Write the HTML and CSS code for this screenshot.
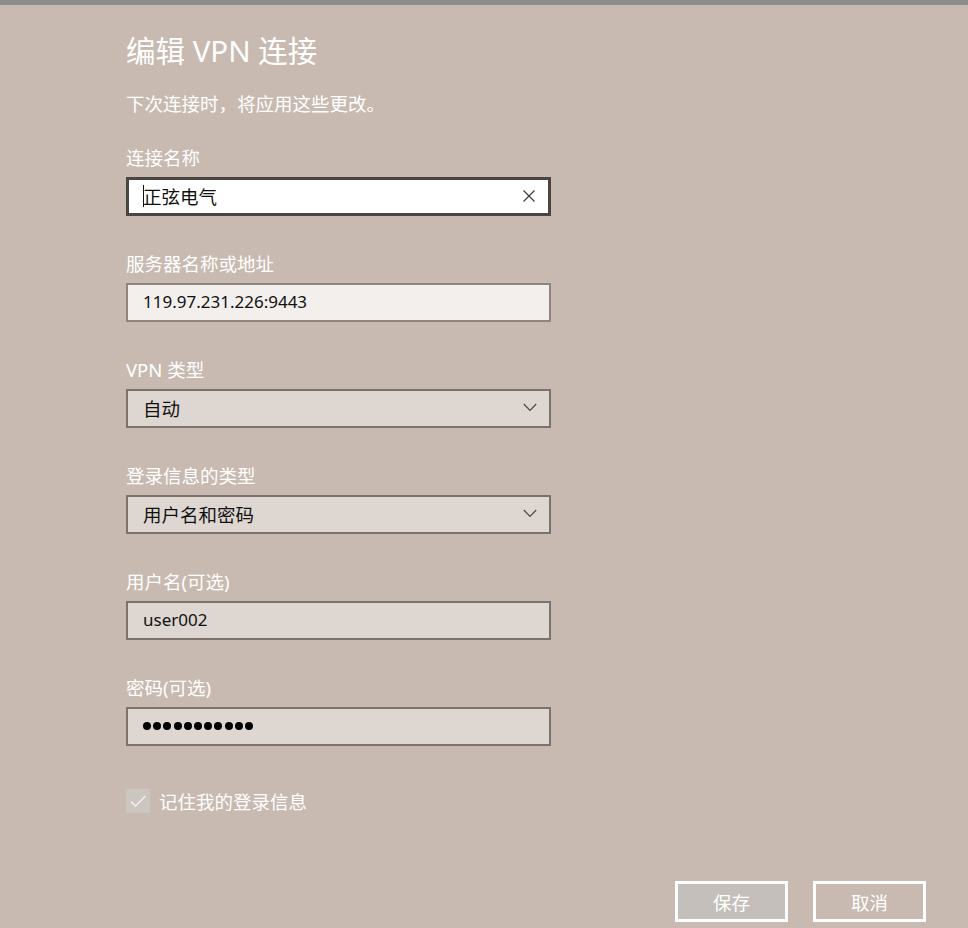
FILE: index.html
```html
<!DOCTYPE html>
<html lang="zh-CN">

<head>
  <meta charset="UTF-8" />
  <title>编辑 VPN 连接</title>
  <link rel="stylesheet" href="styles.css">
</head>

<body>

  <div class="topbar"></div>

  <div class="panel">
    <h1>编辑 VPN 连接</h1>
    <p class="hint">下次连接时，将应用这些更改。</p>

    <div class="field">
      <label>连接名称</label>
      <div class="box box-focus">
        <span class="value"><span class="caret"></span>正弦电气</span>
        <svg class="icon" width="14" height="14" viewBox="0 0 14 14">
          <path d="M1.5 1.5 L12.5 12.5 M12.5 1.5 L1.5 12.5" stroke="#3a3633" stroke-width="1.1" fill="none" />
        </svg>
      </div>
    </div>

    <div class="field">
      <label>服务器名称或地址</label>
      <div class="box box-light">
        <span class="value latin">119.97.231.226:9443</span>
      </div>
    </div>

    <div class="field">
      <label>VPN 类型</label>
      <div class="box box-select">
        <span class="value">自动</span>
        <svg class="icon" width="14" height="9" viewBox="0 0 14 9">
          <path d="M0.8 1 L7 7.5 L13.2 1" stroke="#4a4440" stroke-width="1.1" fill="none" />
        </svg>
      </div>
    </div>

    <div class="field">
      <label>登录信息的类型</label>
      <div class="box box-select">
        <span class="value">用户名和密码</span>
        <svg class="icon" width="14" height="9" viewBox="0 0 14 9">
          <path d="M0.8 1 L7 7.5 L13.2 1" stroke="#4a4440" stroke-width="1.1" fill="none" />
        </svg>
      </div>
    </div>

    <div class="field">
      <label>用户名(可选)</label>
      <div class="box box-select">
        <span class="value latin">user002</span>
      </div>
    </div>

    <div class="field">
      <label>密码(可选)</label>
      <div class="box box-select">
        <span class="dots">
          <i></i><i></i><i></i><i></i><i></i><i></i><i></i><i></i><i></i><i></i><i></i>
        </span>
      </div>
    </div>

    <div class="remember">
      <span class="check">
        <svg width="24" height="24" viewBox="0 0 24 24">
          <path d="M5 12.5 L9.5 17 L19.5 7" stroke="#f4f1ee" stroke-width="1.4" fill="none" />
        </svg>
      </span>
      <span>记住我的登录信息</span>
    </div>
  </div>

  <div class="actions">
    <button class="btn btn-save">保存</button>
    <button class="btn">取消</button>
  </div>

</body>
</html>
```

FILE: styles.css
```css
body {
  margin: 0;
  background: #c8bab0;
  font-family: 'Noto Sans', 'Noto Sans CJK SC', sans-serif;
  color: #ffffff;
  height: 928px;
  overflow: hidden;
}

.topbar {
  height: 5px;
  background: #8c8c8c;
}

.panel {
  padding-left: 126px;
  width: 425px;
}

h1 {
  font-size: 29.5px;
  font-weight: 400;
  line-height: 36px;
  margin: 28px 0 0 0;
}

.hint {
  font-size: 18.5px;
  line-height: 24px;
  margin: 23px 0 0 0;
}

.field {
  margin-top: 30px;
}

.field + .field {
  margin-top: 36px;
}

.field label {
  display: block;
  font-size: 18.5px;
  line-height: 24px;
  margin-bottom: 7px;
}

.box {
  box-sizing: border-box;
  height: 39px;
  display: flex;
  align-items: center;
  justify-content: space-between;
  padding: 0 12px 2px 15px;
  border: 2px solid #857c77;
  color: #111111;
  font-size: 18.5px;
}

.box-focus {
  background: #ffffff;
  border: 3px solid #4b4542;
  padding-left: 14px;
}

.box-light {
  background: #f3efec;
  border-color: #8e8580;
}

.box-select {
  background: #ded6d1;
  border-color: #7b726d;
}

.value {
  display: flex;
  align-items: center;
}

.latin {
  font-size: 17px;
}

.caret {
  display: inline-block;
  width: 1px;
  height: 22px;
  background: #111111;
  margin-right: -1px;
}

.dots {
  display: flex;
  gap: 2.2px;
}

.dots i {
  width: 8px;
  height: 8px;
  border-radius: 50%;
  background: #000000;
}

.remember {
  display: flex;
  align-items: center;
  gap: 9px;
  margin-top: 42px;
  font-size: 18.5px;
}

.check {
  width: 24px;
  height: 24px;
  background: #ccc6c1;
  display: flex;
}

.actions {
  display: flex;
  justify-content: flex-end;
  gap: 25px;
  padding-right: 42px;
  margin-top: 67px;
}

.btn {
  box-sizing: border-box;
  width: 113px;
  height: 41px;
  border: 3px solid #ffffff;
  background: transparent;
  color: #ffffff;
  font-family: 'Noto Sans', 'Noto Sans CJK SC', sans-serif;
  font-size: 18.5px;
  padding: 0;
}

.btn-save {
  background: #c4bfba;
}
```
